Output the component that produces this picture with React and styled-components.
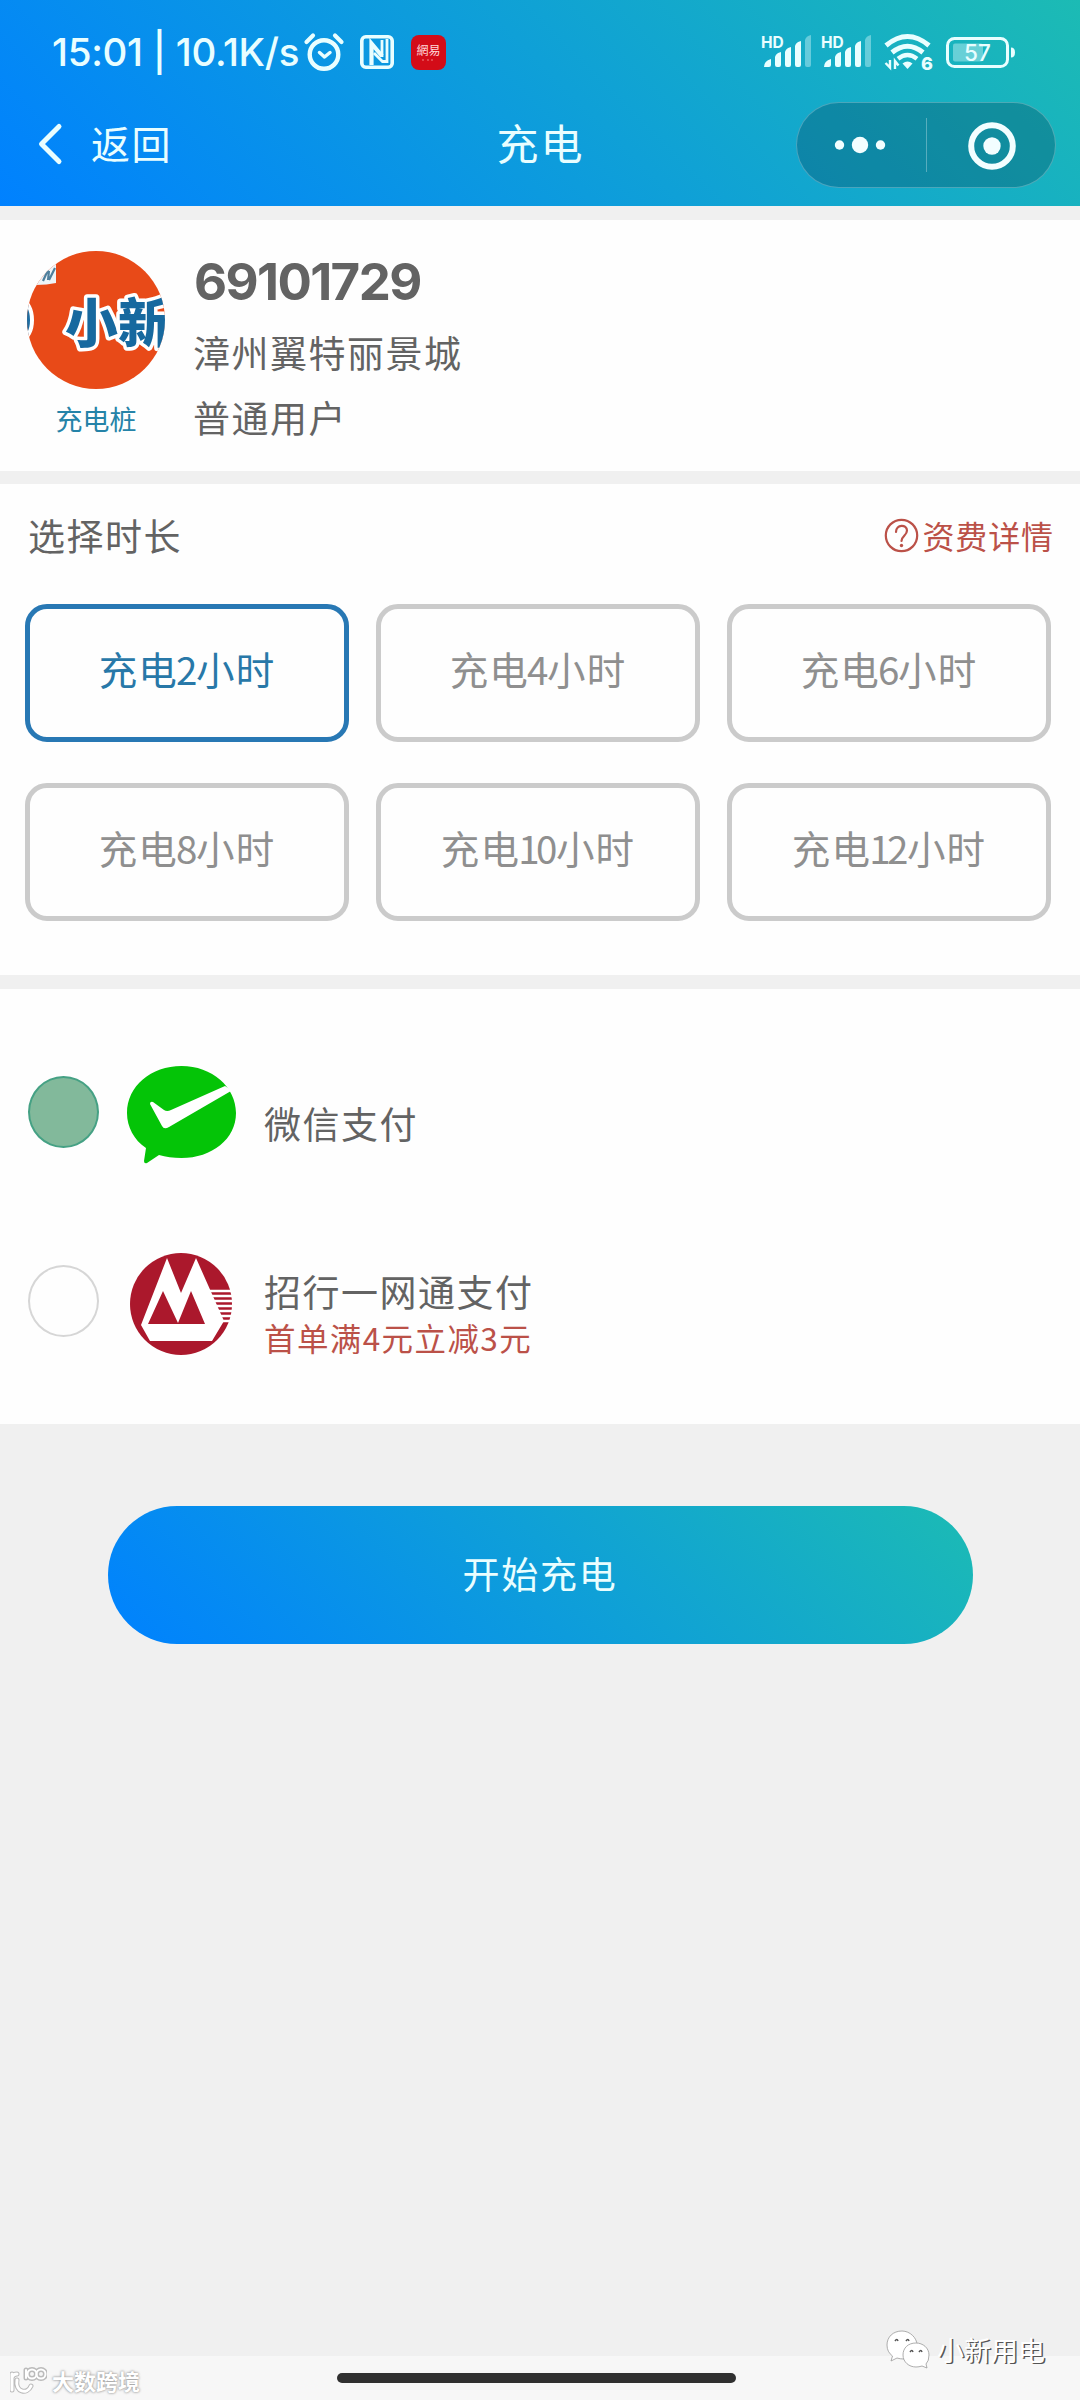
import React, { useState } from 'react'
import styled, { createGlobalStyle } from 'styled-components'

const GlobalStyle = createGlobalStyle`
  * {
    box-sizing: border-box;
  }
  body {
    margin: 0;
    background: #f0f0f0;
    font-family: 'Noto Sans CJK SC', sans-serif;
  }
`

const Page = styled.div`
  position: relative;
  display: flex;
  flex-direction: column;
  width: 1080px;
  height: 2400px;
  background: #f0f0f0;
  overflow: hidden;
`

const Header = styled.header`
  height: 206px;
  padding-top: 30px;
  background: linear-gradient(45deg, #0081ff, #1cbbb4);
  color: #e9feff;
`

const StatusBar = styled.div`
  display: flex;
  align-items: center;
  justify-content: space-between;
  height: 44px;
  padding: 0 65px 0 52px;
`

const StatusGroup = styled.div`
  display: flex;
  align-items: center;
`

const Clock = styled.span`
  width: 252px;
  font-family: Inter, sans-serif;
  font-size: 38.5px;
  font-weight: 500;
  line-height: 44px;
  letter-spacing: -0.3px;
  white-space: pre;
`

const Icon = styled.svg`
  display: block;
  flex: none;
  margin-left: ${(p) => p.$left || 0}px;
  overflow: visible;
`

const NavBar = styled.div`
  display: grid;
  grid-template-columns: 1fr auto 1fr;
  align-items: center;
  height: 86px;
  margin-top: 28px;
  padding: 0 24px 0 39px;
`

const Back = styled.div`
  display: flex;
  align-items: center;
  gap: 29px;
  padding-bottom: 3px;
  font-size: 39px;
  line-height: 46px;
  letter-spacing: 1.5px;
`

const NavTitle = styled.div`
  padding: 0 14px 6px 0;
  font-size: 42px;
  line-height: 50px;
  letter-spacing: 2px;
`

const BackText = styled.span`
  padding-bottom: 3px;
`

const Capsule = styled.div`
  display: flex;
  align-items: center;
  justify-self: end;
  width: 260px;
  height: 86px;
  border: 1.5px solid rgba(255, 255, 255, 0.25);
  border-radius: 43px;
  background: rgba(0, 40, 60, 0.26);
`

const CapsuleHalf = styled.div`
  display: flex;
  align-items: center;
  justify-content: center;
  width: 50%;
  height: 54px;
  padding: ${(p) => (p.$divided ? '2px 0 0 2px' : '0 3px 0 0')};
  border-left: ${(p) => (p.$divided ? '1px solid rgba(255, 255, 255, 0.3)' : 'none')};
`

const Card = styled.section`
  height: ${(p) => p.$height}px;
  margin-top: ${(p) => p.$gap || 13}px;
  background: #fefefe;
  color: #636363;
`

const Station = styled(Card)`
  display: flex;
  padding: 31px 27px 0;
`

const AvatarColumn = styled.div`
  display: flex;
  flex-direction: column;
  align-items: center;
  width: 138px;
`

const AvatarLabel = styled.div`
  margin-top: 10px;
  color: #2583a8;
  font-size: 27px;
  line-height: 40px;
`

const StationInfo = styled.div`
  padding-left: 28px;
`

const StationId = styled.div`
  height: 63px;
  margin-left: 1px;
  font-family: Inter, sans-serif;
  font-size: 51px;
  font-weight: 700;
  line-height: 62px;
  letter-spacing: -1.6px;
`

const StationText = styled.div`
  height: 65px;
  font-size: 37px;
  line-height: 76px;
  letter-spacing: 1.5px;
`

const SectionHead = styled.div`
  display: flex;
  align-items: center;
  justify-content: space-between;
  height: 102px;
  padding: 0 26px 0 28px;
  font-size: 37px;
  letter-spacing: 1.5px;
`

const FeeLink = styled.div`
  display: flex;
  align-items: center;
  gap: 3px;
  color: #bb5148;
  font-size: 32px;
  letter-spacing: 0.9px;
`

const Hours = styled.div`
  display: grid;
  grid-template-columns: repeat(3, 324px);
  grid-auto-rows: 138px;
  gap: 41px 27px;
  margin-top: 18px;
  padding-left: 25px;
`

const HourButton = styled.button`
  padding: 0 0 10px;
  border: 5px solid ${(p) => (p.$active ? '#2878b4' : '#cbcbcb')};
  border-radius: 22px;
  background: #fefefe;
  color: ${(p) => (p.$active ? '#2878a8' : '#8f8f8f')};
  font-family: inherit;
  font-size: 38.5px;
  line-height: 50px;
  letter-spacing: 1.2px;
`

const HourNumber = styled.span`
  letter-spacing: -3.5px;
  margin: 0 2px 0 -2px;
`

const PayCard = styled(Card)`
  padding: 65px 28px 0;
`

const PayRow = styled.div`
  display: flex;
  align-items: center;
  height: 116px;
  margin-bottom: 73px;
`

const Radio = styled.span`
  flex: none;
  width: 71px;
  height: 72px;
  border: 2px solid ${(p) => (p.$checked ? '#45a184' : '#d6d6d6')};
  border-radius: 50%;
  background: ${(p) => (p.$checked ? '#82b99b' : '#fefefe')};
`

const PayLogo = styled.div`
  display: flex;
  justify-content: center;
  width: 110px;
  margin: 0 28px 0 27px;
  padding-top: 6px;
`

const PayText = styled.div`
  padding-top: 23px;
`

const PayName = styled.div`
  font-size: 37px;
  line-height: 49px;
  letter-spacing: 1.5px;
`

const PayPromo = styled.div`
  color: #bb5148;
  font-size: 31.5px;
  line-height: 43px;
  letter-spacing: 1.4px;
`

const StartButton = styled.button`
  align-self: center;
  width: 865px;
  height: 138px;
  margin-top: 82px;
  padding: 0 0 4px;
  border: 0;
  border-radius: 69px;
  background: linear-gradient(45deg, #0081ff, #1cbbb4);
  color: #e9feff;
  font-family: inherit;
  font-size: 37px;
  letter-spacing: 1.7px;
`

const GestureArea = styled.footer`
  display: flex;
  justify-content: center;
  height: 44px;
  margin-top: auto;
  padding: 17px 7px 0 0;
  background: #f7f7f7;
`

const GestureBar = styled.div`
  width: 399px;
  height: 10px;
  border-radius: 5px;
  background: #303030;
`

const Mark = styled.div`
  position: absolute;
  display: flex;
  align-items: center;
  color: #fff;
`

const PlatformMark = styled(Mark)`
  left: 10px;
  bottom: 5px;
  gap: 5px;
  font-size: 22px;
  font-weight: 700;
  line-height: 30px;
  text-shadow: 0 0 2px #999, 0 0 3px #aaa;
`

const AccountMark = styled(Mark)`
  right: 35px;
  bottom: 30px;
  gap: 7px;
  font-size: 27px;
  line-height: 40px;
  text-shadow: 1.5px 1px 0 #555;
`

function AlarmIcon() {
  return (
    <Icon width="40" height="38" viewBox="0 0 40 38" fill="none" stroke="currentColor" strokeLinecap="round">
      <circle cx="20" cy="21.500" r="14.300" strokeWidth="4.400" />
      <path d="M2.500 9 9 2.500M37.500 9 31 2.500" strokeWidth="4.200" />
      <path d="m15.500 19.500 5 4.500 5.500-4.500" strokeWidth="3.500" strokeLinejoin="round" />
    </Icon>
  )
}

function NfcIcon() {
  return (
    <Icon $left={16} width="34" height="34" viewBox="0 0 34 34" fill="none" stroke="currentColor">
      <rect x="1.800" y="1.800" width="30.400" height="30.400" rx="4" strokeWidth="3.600" />
      <path d="M11.500 30V8.500L22 21" strokeWidth="4.200" />
      <path d="M27 4v22.500h-4.500L14 18M22 5v17" strokeWidth="2.800" />
    </Icon>
  )
}

function NewsBadge() {
  return (
    <Icon $left={17} width="35" height="35" viewBox="0 0 35 35">
      <rect width="35" height="35" rx="8" fill="#d30c18" />
      <text x="17.500" y="19.500" fill="#ffd9d9" fontSize="12" textAnchor="middle" fontFamily="Noto Sans CJK TC, sans-serif">
        網易
      </text>
      <path d="M11 25h2M16 25h2M20 25h2" stroke="#f08080" strokeWidth="1" />
    </Icon>
  )
}

function SignalIcon({ left }) {
  return (
    <Icon $left={left} width="50" height="34" viewBox="0 0 50 34" fill="currentColor">
      <text x="-1" y="12.500" fontFamily="Inter, sans-serif" fontSize="15.500" fontWeight="700">
        HD
      </text>
      <path d="M2 32q0-6 7-8v6q0 2-2 2zM13 22q1-4 6-5v13q0 2-2 2h-2q-2 0-2-2zM23 17q1-4 6-5v18q0 2-2 2h-2q-2 0-2-2zM33 11q1-4 6-5v24q0 2-2 2h-2q-2 0-2-2z" />
      <path d="M43 5q1-4 6-5v30q0 2-2 2h-2q-2 0-2-2z" opacity=".38" />
    </Icon>
  )
}

function WifiIcon() {
  return (
    <Icon $left={12} width="47" height="36" viewBox="0 0 47 36" fill="none" stroke="currentColor">
      <path d="M2 11.500Q23.500-6.500 45 11.500" strokeWidth="5" />
      <path d="M8 18.500q15.500-12.500 31 0" strokeWidth="5" />
      <path d="M14 24.800q9.500-7.500 19 0" strokeWidth="4.500" />
      <path d="M18.500 29.500q5-4 10 0l-5 5.500z" fill="currentColor" stroke="none" />
      <path d="M6 26v7.500L1.500 29M11 35v-8l3.500 4.500" strokeWidth="2.400" />
      <text x="37" y="35.500" fill="currentColor" stroke="none" fontFamily="Inter, sans-serif" fontSize="18" fontWeight="800">
        6
      </text>
    </Icon>
  )
}

function BatteryIcon() {
  return (
    <Icon $left={15} width="69" height="31" viewBox="0 0 69 31">
      <rect x="7" y="6.500" width="30" height="18" rx="2" fill="currentColor" opacity=".38" />
      <rect x="1.500" y="1.500" width="60" height="28" rx="7" fill="none" stroke="currentColor" strokeWidth="3" />
      <path d="M65 10.500q4 0 4 5t-4 5z" fill="currentColor" />
      <text x="31.500" y="24" fill="currentColor" textAnchor="middle" fontFamily="Inter, sans-serif" fontSize="22.500" fontWeight="500">
        57
      </text>
    </Icon>
  )
}

function StationAvatar() {
  return (
    <svg width="138" height="138" viewBox="0 0 138 138">
      <defs>
        <clipPath id="avatar">
          <circle cx="69" cy="69" r="69" />
        </clipPath>
      </defs>
      <g clipPath="url(#avatar)">
        <rect width="138" height="138" fill="#e84a18" />
        <path d="M0 0h29v32q-9 2-20 2H0z" fill="#eef4f8" />
        <path d="M16 30l5-11M21 29l1-9M22 29l6-12" stroke="#4f7f9c" strokeWidth="2.200" />
        <ellipse cx="-5" cy="69" rx="10" ry="19" fill="#1f6ea3" stroke="#fff" strokeWidth="4" />
        <g fill="#17699f" stroke="#fff" strokeWidth="7" strokeLinejoin="round" fontWeight="900" fontSize="53" paintOrder="stroke">
          <text x="38" y="92">小</text>
          <text x="91" y="92">新</text>
        </g>
      </g>
    </svg>
  )
}

function WechatPayLogo() {
  return (
    <svg width="109" height="98" viewBox="0 0 109 98">
      <path
        d="M54.500 0C24 0 0 20 0 47c0 14 7 27 19 35l-2 13q0 3 3 2l12-8q10 3 22.500 3C85 92 109 73 109 47S85 0 54.500 0z"
        fill="#04c407"
      />
      <path d="M23 38q0-3 3-2l11 8q3 2 7 0l54-24q4 2 6 5L42 61q-5 3-7-1z" fill="#fff" />
    </svg>
  )
}

function CmbLogo() {
  return (
    <svg width="102" height="102" viewBox="0 0 102 102">
      <circle cx="51" cy="51" r="51" fill="#ab182c" />
      <path d="M37 5 11 72l9 16h62l12-20L66 5 51 40z" fill="#fff" />
      <path d="M33 38 18 71h57L61 38 48 70z" fill="#ab182c" />
      <path d="M79 38h23M80 43h22M82 48h20M84 53h18M86 58h16M88 63h14M90 68h12" stroke="#fff" strokeWidth="2.700" />
    </svg>
  )
}

function WechatMarkIcon() {
  return (
    <svg width="44" height="40" viewBox="0 0 44 40" fill="#fff" stroke="#999" strokeWidth=".8">
      <path d="M16 1C7 1 1 7 1 15q0 7 5.500 11L5 31l6-3q3 1 7 1c8 0 13-7 13-14S24 1 16 1z" />
      <path d="M30 13c-8 0-13 5-13 12s6 12 13 12q3 0 6-1l5 2-1-4q3-3 3-9c0-7-6-12-13-12z" />
      <path d="M9 11q2-3 3 0M20 11q2-3 3 0M24 22q2-3 3 0M33 22q2-3 3 0" fill="none" stroke="#555" strokeWidth="1.500" />
    </svg>
  )
}

function PlatformMarkIcon() {
  return (
    <svg width="37" height="28" viewBox="0 0 37 28" fill="none" strokeLinecap="round">
      <g stroke="#bbb" strokeWidth="5">
        <path d="M2 8v16M2 12q1-4 5-4M7 14c-2 12 10 15 14 6" />
        <path d="M16 4v8" />
        <circle cx="22" cy="8" r="4.500" />
        <circle cx="31" cy="8" r="4.500" />
      </g>
      <g stroke="#fff" strokeWidth="3">
        <path d="M2 8v16M2 12q1-4 5-4M7 14c-2 12 10 15 14 6" />
        <path d="M16 4v8" strokeWidth="2" />
        <circle cx="22" cy="8" r="4.500" strokeWidth="2" />
        <circle cx="31" cy="8" r="4.500" strokeWidth="2" />
      </g>
    </svg>
  )
}

const HOURS = [2, 4, 6, 8, 10, 12]

export default function App() {
  const [hours, setHours] = useState(2)
  const [payment, setPayment] = useState('wechat')

  return (
    <Page>
      <GlobalStyle />
      <Header>
        <StatusBar>
          <StatusGroup>
            <Clock>15:01 | 10.1K/s</Clock>
            <AlarmIcon />
            <NfcIcon />
            <NewsBadge />
          </StatusGroup>
          <StatusGroup>
            <SignalIcon />
            <SignalIcon left={10} />
            <WifiIcon />
            <BatteryIcon />
          </StatusGroup>
        </StatusBar>
        <NavBar>
          <Back>
            <Icon width="23" height="40" viewBox="0 0 23 40" fill="none" stroke="currentColor" strokeWidth="5" strokeLinecap="round" strokeLinejoin="round">
              <path d="M20 2.500 2.500 20 20 37.500" />
            </Icon>
            <BackText>返回</BackText>
          </Back>
          <NavTitle>充电</NavTitle>
          <Capsule>
            <CapsuleHalf>
              <svg width="52" height="18" viewBox="0 0 52 18" fill="#f2feff">
                <circle cx="5.500" cy="9" r="4.700" />
                <circle cx="26" cy="9" r="8.200" />
                <circle cx="46.500" cy="9" r="4.700" />
              </svg>
            </CapsuleHalf>
            <CapsuleHalf $divided>
              <svg width="48" height="48" viewBox="0 0 48 48">
                <circle cx="24" cy="24" r="20.800" fill="none" stroke="#f2feff" strokeWidth="6" />
                <circle cx="24" cy="24" r="8.700" fill="#f2feff" />
              </svg>
            </CapsuleHalf>
          </Capsule>
        </NavBar>
      </Header>

      <Station $height={251} $gap={14}>
        <AvatarColumn>
          <StationAvatar />
          <AvatarLabel>充电桩</AvatarLabel>
        </AvatarColumn>
        <StationInfo>
          <StationId>69101729</StationId>
          <StationText>漳州翼特丽景城</StationText>
          <StationText>普通用户</StationText>
        </StationInfo>
      </Station>

      <Card $height={491}>
        <SectionHead>
          选择时长
          <FeeLink>
            <svg width="35" height="35" viewBox="0 0 35 35" fill="none" stroke="currentColor" strokeWidth="2.200">
              <circle cx="17.500" cy="17.500" r="15.700" />
              <path d="M12 14c0-8 11-8 11-1.500 0 5-5.500 5.500-5.500 10.500" strokeLinecap="round" />
              <circle cx="17.500" cy="27.500" r="1.700" fill="currentColor" stroke="none" />
            </svg>
            资费详情
          </FeeLink>
        </SectionHead>
        <Hours>
          {HOURS.map((h) => (
            <HourButton key={h} $active={h === hours} onClick={() => setHours(h)}>
              充电<HourNumber>{h}</HourNumber>小时
            </HourButton>
          ))}
        </Hours>
      </Card>

      <PayCard $height={435} $gap={14}>
        <PayRow onClick={() => setPayment('wechat')}>
          <Radio $checked={payment === 'wechat'} />
          <PayLogo>
            <WechatPayLogo />
          </PayLogo>
          <PayText>
            <PayName>微信支付</PayName>
          </PayText>
        </PayRow>
        <PayRow onClick={() => setPayment('cmb')}>
          <Radio $checked={payment === 'cmb'} />
          <PayLogo>
            <CmbLogo />
          </PayLogo>
          <PayText>
            <PayName>招行一网通支付</PayName>
            <PayPromo>首单满4元立减3元</PayPromo>
          </PayText>
        </PayRow>
      </PayCard>

      <StartButton>开始充电</StartButton>

      <GestureArea>
        <GestureBar />
      </GestureArea>

      <PlatformMark>
        <PlatformMarkIcon />
        大数跨境
      </PlatformMark>
      <AccountMark>
        <WechatMarkIcon />
        小新用电
      </AccountMark>
    </Page>
  )
}
